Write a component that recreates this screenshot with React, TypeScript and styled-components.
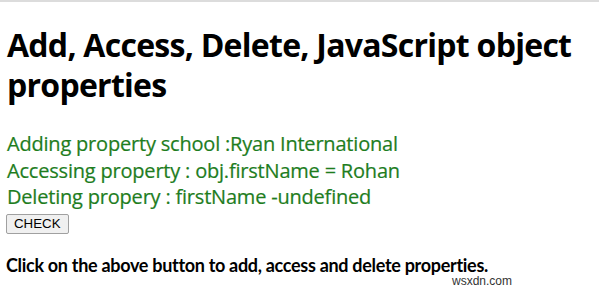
import styled, { createGlobalStyle } from "styled-components";

const GlobalStyle = createGlobalStyle`
  html, body {
    margin: 0;
    padding: 0;
    background: #ffffff;
  }
  body {
    font-family: "Open Sans", "Noto Sans", sans-serif;
  }
`;

const Page = styled.div`
  position: relative;
  width: 599px;
  height: 291px;
  overflow: hidden;
  border-top: 2px solid #dcdcdc;
  box-sizing: border-box;
  padding: 23px 7px 0 7px;
`;

const Title = styled.h1`
  margin: 0;
  font-size: 32px;
  font-weight: 700;
  line-height: 40px;
  color: #000000;
  letter-spacing: -0.73px;
`;

const Results = styled.div`
  margin-top: 26px;
`;

const ResultLine = styled.div`
  font-size: 20px;
  line-height: 26.6px;
  color: #1e7d1e;
  letter-spacing: -0.2px;
  -webkit-text-stroke: 0.2px #1e7d1e;
`;

const CheckButton = styled.button`
  display: block;
  margin: 3px 0 0 -1px;
  height: 20px;
  padding: 0 7px;
  font-family: "Liberation Sans", Arial, sans-serif;
  font-size: 13.3px;
  color: #000000;
  background: #f0f0f0;
  border: 1px solid #a0a0a0;
  border-radius: 2px;
`;

const Hint = styled.p`
  margin: 19px 0 0 -1px;
  font-family: Lato, "Open Sans", sans-serif;
  font-size: 18px;
  font-weight: 700;
  line-height: 24px;
  color: #000000;
  letter-spacing: -0.3px;
`;

const Watermark = styled.span`
  position: absolute;
  right: 87px;
  bottom: 3px;
  font-family: "Liberation Sans", Arial, sans-serif;
  font-size: 12px;
  color: #333333;
`;

export default function App() {
  return (
    <>
      <GlobalStyle />
      <Page>
        <Title>Add, Access, Delete, JavaScript object properties</Title>
        <Results>
          <ResultLine>Adding property school :Ryan International</ResultLine>
          <ResultLine>Accessing property : obj.firstName = Rohan</ResultLine>
          <ResultLine>Deleting propery : firstName -undefined</ResultLine>
        </Results>
        <CheckButton>CHECK</CheckButton>
        <Hint>Click on the above button to add, access and delete properties.</Hint>
        <Watermark>wsxdn.com</Watermark>
      </Page>
    </>
  );
}
